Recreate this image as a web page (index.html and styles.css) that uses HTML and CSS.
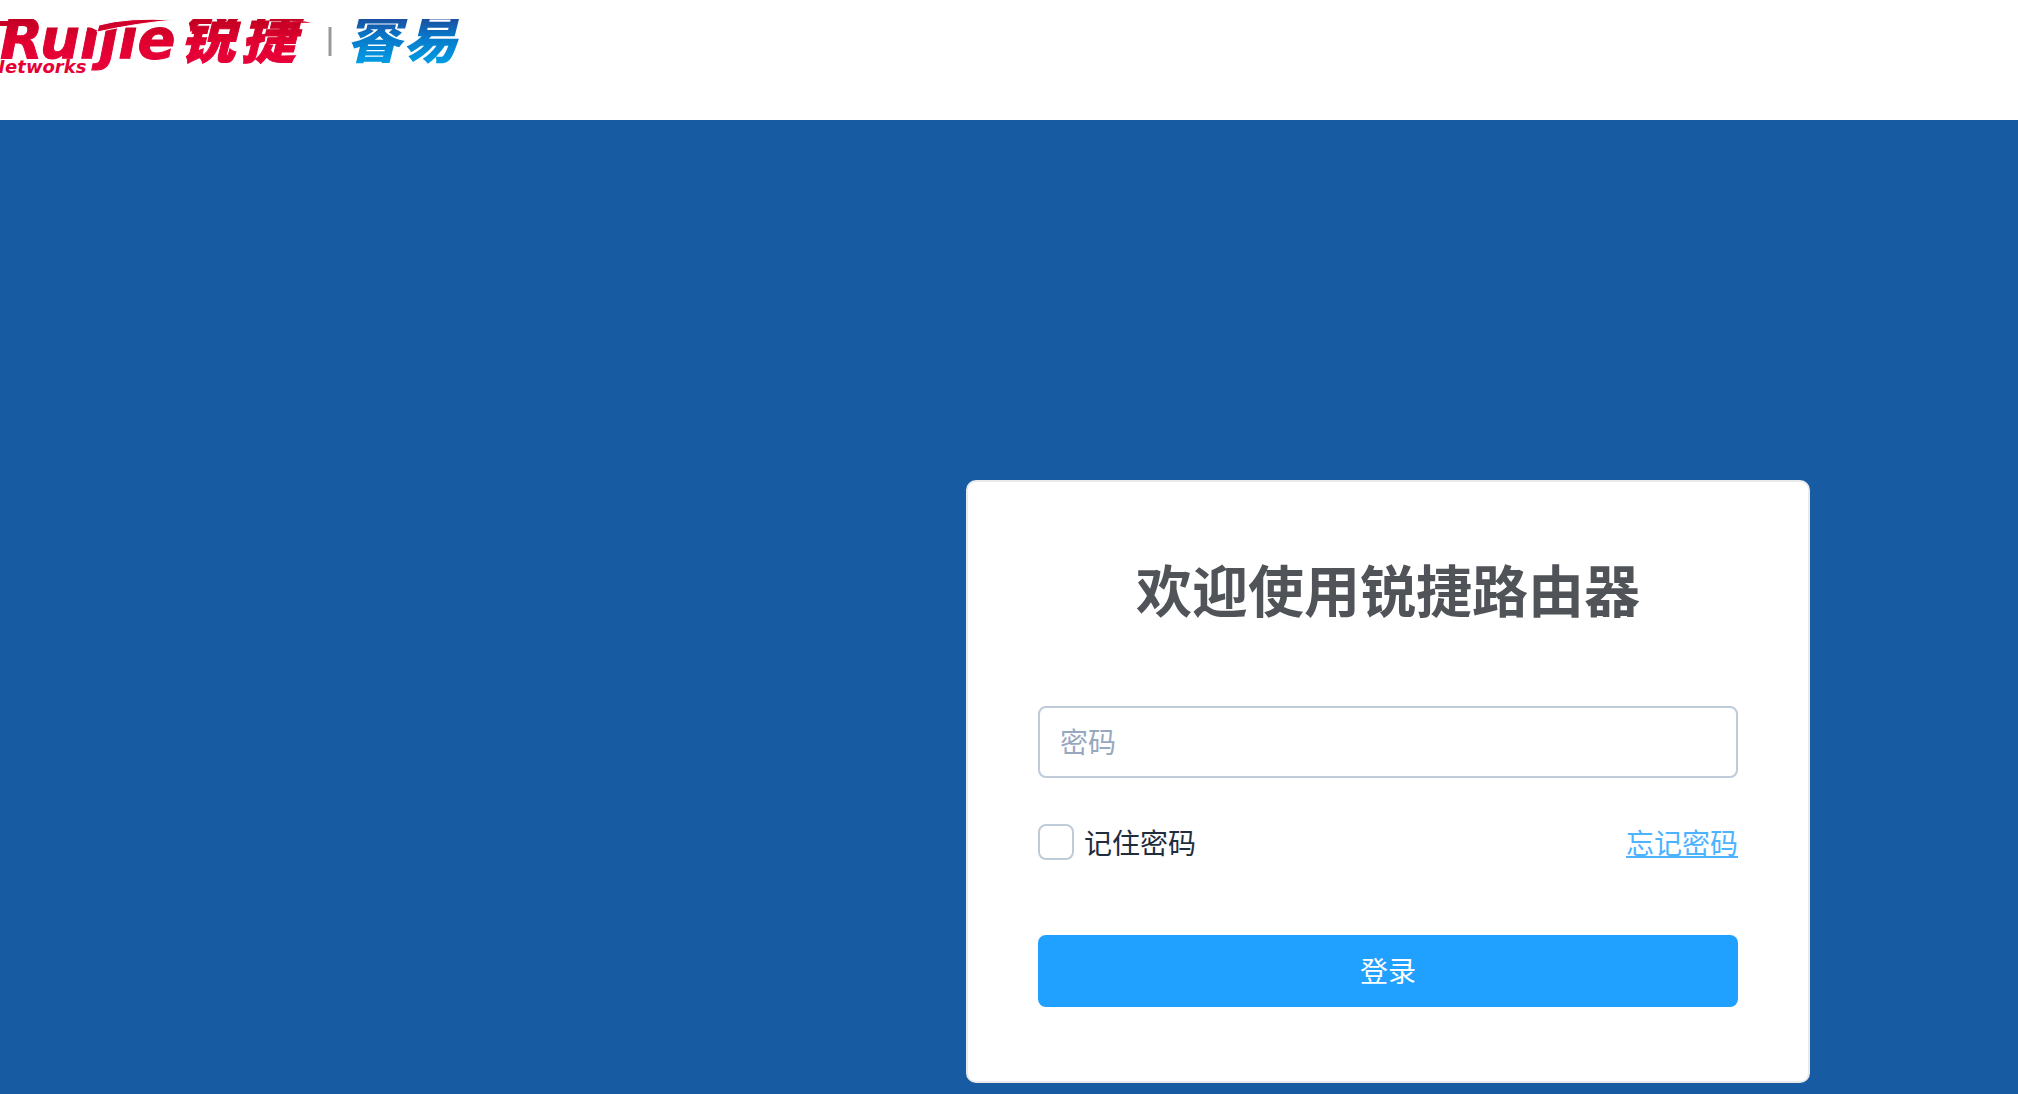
FILE: index.html
```html
<!DOCTYPE html>
<html lang="zh-CN">
<head>
<meta charset="utf-8">
<meta name="viewport" content="width=device-width, initial-scale=1">
<title>欢迎使用锐捷路由器</title>
<link rel="stylesheet" href="styles.css">
</head>
<body class="page">
<header class="header">
<svg class="logo" viewBox="0 0 480 58" role="img" aria-label="Ruijie Networks 锐捷 睿易">
<defs>
<linearGradient id="red" x1="0" y1="0" x2="0" y2="44" gradientUnits="userSpaceOnUse"><stop offset="0" stop-color="#c00020"/><stop offset=".5" stop-color="#e00030"/><stop offset="1" stop-color="#e80038"/></linearGradient>
<linearGradient id="blue" x1="0" y1="0" x2="0" y2="44" gradientUnits="userSpaceOnUse"><stop offset="0" stop-color="#1a4fa0"/><stop offset=".4" stop-color="#0878c8"/><stop offset="1" stop-color="#009ce4"/></linearGradient>
</defs>
<text class="logo-latin" x="0" y="39" fill="url(#red)" stroke="url(#red)">Ruijie</text>
<path d="M88 -6H190V4L150 6L96 11L88 7Z" fill="#fff"/>
<path d="M99 6Q128 -2 174 1Q138 4 97 13Z" fill="#d0002a" stroke="#fff" stroke-width="1"/>
<path d="M0 2H30V7H0Z" fill="#c80028"/>
<text class="logo-sub" x="-10" y="54" fill="#e60035">Networks</text>
<text class="logo-cjk" x="180 241" y="39" fill="url(#red)" stroke="url(#red)">锐捷</text>
<path d="M286 4Q300 0 311 4Q298 3 286 6Z" fill="#d0002a"/>
<path d="M330 8V37" stroke="#999" stroke-width="3"/>
<text class="logo-cjk" x="346 403" y="39" fill="url(#blue)">睿易</text>
</svg>
</header>
<main class="main">
<form class="card">
<h1 class="title">欢迎使用锐捷路由器</h1>
<input class="field" type="password" placeholder="密码" aria-label="密码">
<div class="options">
<label class="remember"><input class="check" type="checkbox"><span>记住密码</span></label>
<a class="forgot" href="#">忘记密码</a>
</div>
<button class="submit" type="button">登录</button>
</form>
</main>
</body>
</html>
```

FILE: styles.css
```css
* { box-sizing: border-box; }
.page {
  display: flex;
  flex-direction: column;
  min-height: 100vh;
  margin: 0;
  background: #fff;
  color: #1f2d3d;
  font-family: "Noto Sans CJK SC", sans-serif;
  font-size: 28px;
  line-height: 36px;
}
.header {
  height: 120px;
  padding-top: 19px;
}
.logo {
  display: block;
  width: 480px;
  height: 58px;
  overflow: hidden;
}
.logo-latin { font: italic bold 56px "DejaVu Sans", sans-serif; }
.logo-sub { font: italic bold 18px "DejaVu Sans", sans-serif; }
.logo-cjk { font: italic 900 55px "Noto Sans CJK SC", sans-serif; }
.main {
  display: flex;
  flex: 1;
  justify-content: flex-end;
  align-items: flex-start;
  padding: 360px 208px 11px 24px;
  background: #175ca3;
}
.card {
  display: flex;
  flex-direction: column;
  width: 100%;
  max-width: 844px;
  padding: 66px 70px 74px;
  border: 2px solid #eaeaea;
  border-radius: 10px;
  background: #fff;
}
.title {
  margin: 0 0 78px;
  color: #505458;
  font-size: 56px;
  line-height: 80px;
  text-align: center;
}
.field {
  width: 100%;
  height: 72px;
  padding: 0 20px 2px;
  border: 2px solid #bfcbd9;
  border-radius: 8px;
  background: #fff;
  color: inherit;
  font: inherit;
}
.field::placeholder { color: #97a8be; opacity: 1; }
.options {
  display: flex;
  justify-content: space-between;
  align-items: center;
  margin: 46px 0 75px;
}
.remember {
  display: flex;
  align-items: center;
  gap: 10px;
}
.check {
  appearance: none;
  width: 36px;
  height: 36px;
  margin: 0;
  border: 2px solid #bfcbd9;
  border-radius: 8px;
  background: #fff;
}
.check:checked { background: #20a0ff; }
.forgot {
  color: #4db3ff;
  text-underline-offset: 2px;
  text-decoration-skip-ink: none;
}
.submit {
  height: 72px;
  padding: 0 0 2px;
  border: 0;
  border-radius: 8px;
  background: #20a0ff;
  color: #fff;
  font: inherit;
}
```
